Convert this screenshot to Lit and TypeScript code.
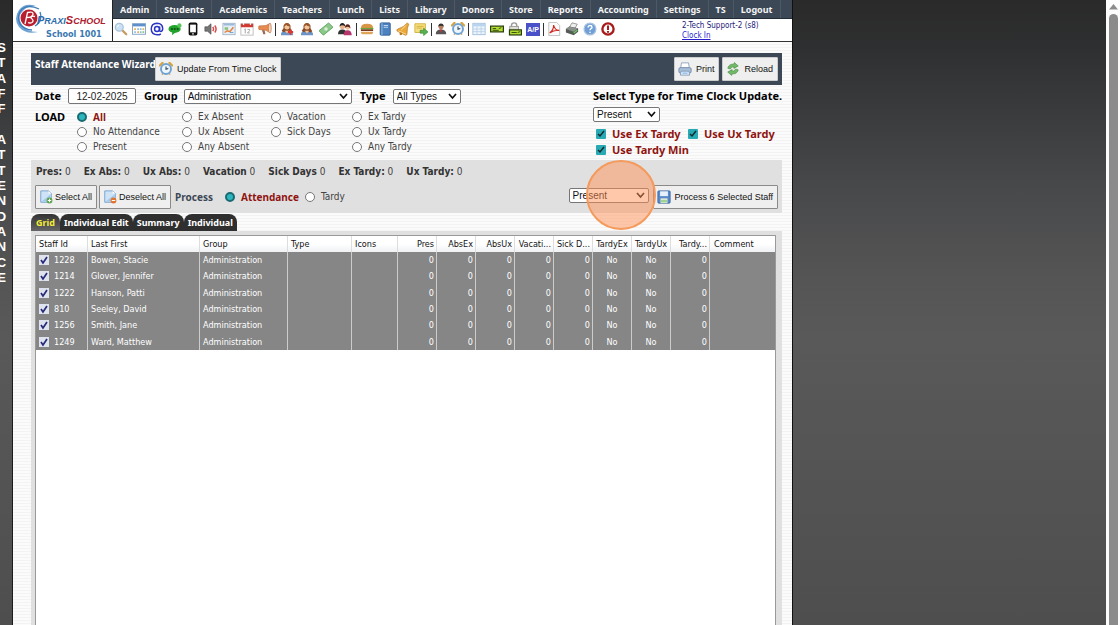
import { LitElement, html, css, svg, TemplateResult } from "lit";
import { customElement, property } from "lit/decorators.js";

const MENU = ["Admin", "Students", "Academics", "Teachers", "Lunch", "Lists", "Library", "Donors", "Store", "Reports", "Accounting", "Settings", "TS", "Logout"];

const person = svg`<path d="M1 15q0-6 7-6t7 6z" fill="#6d93c4"/><path d="M4 7L2 10l2 1.500 4-1 4 1.500 2-1.500L12 7V4q-4-6-8 0z" fill="#8a4a26"/><circle cx="8" cy="5.500" r="3" fill="#f3c69b"/><path d="M4.500 5q0-4 3.500-4t3.500 4q-3.500 0-4.500-1.500Q6 5 4.500 5z" fill="#9c552b"/><path d="M5.500 10L8 13l2.500-3z" fill="#f3c69b"/>`;
const clock = svg`<path d="M1 4l3-3M15 4l-3-3" stroke="#d9a33c" stroke-width="2.500" stroke-linecap="round"/><path d="M3.500 14.500l1-2M12.500 14.500l-1-2" stroke="#d9a33c" stroke-width="1.500"/><circle cx="8" cy="8" r="5.700" fill="#eef6fc" stroke="#6ea3d6" stroke-width="2.200"/><path d="M8 5v3.400l2.600-1" stroke="#345" fill="none" stroke-width="1.200"/>`;
const ticket = svg`<rect x=".7" y="4.700" width="14.600" height="6.600" fill="#b5dc35" stroke="#27400a" stroke-width="1.400"/><path d="M3 7.500h4M3 9.500h7M10 7.500l3-1" stroke="#27400a"/>`;
const sheet = svg`<path d="M2 1h9l3 3v10H2z" fill="#cfe3f7" stroke="#6d9dcb"/><path d="M3 13L13 5v8z" fill="#a5c8ea"/><path d="M11 1v3h3z" fill="#fff"/>`;

const ICONS: Record<string, TemplateResult> = {
  search: svg`<path d="M9 9l5 5" stroke="#c79a63" stroke-width="2.600" stroke-linecap="round"/><circle cx="6" cy="6" r="4.500" fill="#cbe2f5" stroke="#a9c3da" stroke-width="1.500"/><path d="M3.800 6q.2-2 2-2.400" stroke="#fff" fill="none"/>`,
  grid: svg`<rect x=".5" y="2" width="15" height="12" fill="#fff" stroke="#7a9cc0"/><path d="M1 2h14v3H1z" fill="#5f90cb"/><path d="M2.500 7h2v2h-2zM6 10.500h2v2H6zM12 7h2v2h-2z" fill="#e4b04f"/><path d="M6 7h2v2H6zM9 7h2v2H9zM2.500 10.500h2v2h-2zM9 10.500h2v2H9z" fill="#8fbce0"/><path d="M12 10.500h2v2h-2z" fill="#8cc476"/>`,
  at: svg`<circle cx="8" cy="8" r="2.800" fill="none" stroke="#2b35c4" stroke-width="1.700"/><path d="M11 5v4.500q0 1.500 1.500 1.500 2-.5 2-3.500 0-6-6.500-6.200Q1.500 1.500 1.400 8q.3 6.500 7 6.700 2.500 0 4-1.200" fill="none" stroke="#2b35c4" stroke-width="1.700"/>`,
  chat: svg`<ellipse cx="7.500" cy="8" rx="7" ry="4.500" fill="#22a32a"/><path d="M5 11l-.5 4 4-3z" fill="#22a32a"/><circle cx="13" cy="4" r="2.500" fill="#56c65a"/><path d="M3.500 8h2M6.700 8h2M10 8h2" stroke="#0b4510" stroke-width="1.500"/>`,
  phone: svg`<rect x="3" y=".5" width="10" height="15" rx="2" fill="#111"/><path d="M4.700 3h6.600v8.800H4.700z" fill="#fff"/><circle cx="8" cy="13.600" r=".9" fill="#fff"/>`,
  speaker: svg`<path d="M1 5.500h3L8 2v12l-4-3.500H1z" fill="#777" stroke="#444" stroke-width=".7"/><path d="M10 5.500q1.800 2.500 0 5M12.300 4q3 4 0 8" stroke="#d94a4a" fill="none" stroke-width="1.700"/>`,
  chart: svg`<rect x="1" y="1.500" width="14" height="13" fill="#e6eef5" stroke="#9fb3c6"/><path d="M2 2h12v2H2z" fill="#9bbbd9"/><path d="M3 6h4v3H3z" fill="#8bc07c"/><path d="M3 12l3-2 3 1 4-5" stroke="#e37f3c" stroke-width="1.700" fill="none"/><path d="M9 12h4" stroke="#6c9cd2"/>`,
  calendar: svg`<rect x="1" y="2" width="14" height="13" fill="#fff" stroke="#b9b9b9"/><path d="M1 2h14v4H1z" fill="#cf3a33"/><path d="M4 1v2.500M12 1v2.500" stroke="#eee" stroke-width="1.500"/><path d="M5 8.500l1-.7V13M8.500 8.500h2.500V10l-2.500 2.500H11" stroke="#999" fill="none"/>`,
  megaphone: svg`<path d="M1 4.500q-.5 2 0 4l8 1 5 3V1.500L9 4z" fill="#e98b4f" stroke="#b5683c" stroke-width=".7"/><path d="M4.500 9l1.500 5h2.500L7.500 9.500z" fill="#9a6a52"/><ellipse cx="13.500" cy="7" rx="1.700" ry="5.300" fill="#f6d5b9" stroke="#b5683c" stroke-width=".7"/>`,
  personAdd: svg`${person}<path d="M12 8.500v6M9 11.500h6" stroke="#dc3a30" stroke-width="2.200"/>`,
  person,
  money: svg`<path d="M0 10L11 1l5 5L5 15z" fill="#8cc88a" stroke="#4d9950" stroke-width=".9"/><circle cx="8" cy="8" r="2" fill="#d8efd4"/>`,
  people: svg`<circle cx="5" cy="5" r="3" fill="#e9b78d"/><path d="M1.800 5Q2 1 5 1t3.300 4Q5 2.500 1.800 5z" fill="#222"/><path d="M0 14q0-5.500 5-5.500T10 14z" fill="#333"/><circle cx="11" cy="6" r="2.800" fill="#f1c39d"/><path d="M8 6.500q0-4 3-4t3.300 5Q12 4 8 6.500z" fill="#5d2520"/><path d="M6.500 15q0-5.500 4.500-5.500t4.700 5.500z" fill="#b5366d"/>`,
  burger: svg`<path d="M1 7q0-5 7-5t7 5z" fill="#d99545"/><path d="M.7 7.500h14.600" stroke="#68a63c" stroke-width="1.500"/><path d="M1 9.300h14" stroke="#7b3b1c" stroke-width="2"/><path d="M1 11h14q0 3-3 3H4q-3 0-3-3z" fill="#e0a458"/>`,
  book: svg`<rect x="2.500" y="1" width="11.500" height="14" rx="1" fill="#4d82c0" stroke="#2e5a91"/><path d="M4.500 1v14" stroke="#9cc1e8"/><path d="M6.500 4h5M6.500 6h5" stroke="#cfe2f5"/>`,
  bell: svg`<path d="M13 1Q9 6 2 8q-2 1-.5 2.500l9 4.500q2 .5 2-1.500 0-7 2-11z" fill="#eba83a" stroke="#b8771b" stroke-width=".8"/><path d="M2.500 10l9 4" stroke="#fbe0a0"/><path d="M11 4q-2 3-5 5" stroke="#fbe0a0" fill="none"/><circle cx="5.500" cy="13.500" r="1.500" fill="#b8771b"/>`,
  note: svg`<path d="M1 2h12v7l-3 3H1z" fill="#f6df7c" stroke="#d2ae3c"/><path d="M3 5h8M3 7h6" stroke="#cfab44"/><path d="M7 9.500h4V7l5 4.300-5 4.200v-2.700H7z" fill="#58b24e" stroke="#35832f" stroke-width=".7"/>`,
  man: svg`<path d="M1 15q0-6.500 7-6.500t7 6.500z" fill="#555"/><path d="M6.500 8.500L8 14l1.500-5.500z" fill="#c33"/><circle cx="8" cy="4.800" r="3.400" fill="#b57f5e"/><path d="M4.400 4.700Q4.600 .6 8 .6t3.600 4.100Q8 2.500 4.400 4.700z" fill="#333"/>`,
  clock,
  table: svg`<rect x="1" y="1.500" width="14" height="13" fill="#eef5fc" stroke="#9dbcda"/><path d="M1 2h14v3H1z" fill="#b9d4ee"/><path d="M5.700 5v9M10.400 5v9M1 8h14M1 11h14" stroke="#b9d0e6"/>`,
  ticket,
  lockTicket: svg`<path d="M4 6V4q0-3 3-3t3 3v2" fill="none" stroke="#999" stroke-width="1.600"/><rect x="2" y="5" width="10" height="7" fill="#dcdcd4" stroke="#999"/><rect x="1.700" y="9" width="13.600" height="5.800" fill="#b5dc35" stroke="#27400a" stroke-width="1.400"/><path d="M4 12h6M11 12l3-1" stroke="#27400a"/>`,
  pdf: svg`<path d="M2 .5h9l3.500 3.500v11.500H2z" fill="#fbfbfb" stroke="#bbb"/><path d="M3 12.500Q8 9 7.500 3.500q2 6.500 6.500 6-6-.5-11 3z" fill="none" stroke="#d02a22" stroke-width="1.300"/>`,
  printerDark: svg`<path d="M5 6l3-5 6 1.500L11 8z" fill="#eee" stroke="#777" stroke-width=".8"/><path d="M1 8l4-3 10 2v4l-5 4-9-3z" fill="#555b55"/><path d="M1 8l9 3 5-4-10-2z" fill="#8a918a"/><path d="M10 12.500l4-3" stroke="#6fd05a" stroke-width="1.300"/>`,
  help: svg`<circle cx="8" cy="8" r="6.800" fill="#6f9fd6" stroke="#a9c3df" stroke-width="1.400"/><path d="M5.800 6.300q.2-2.300 2.300-2.300t2.200 2q0 1-1.300 1.700Q8 8.300 8 9.500M8 11v1.500" stroke="#fff" stroke-width="1.600" fill="none"/>`,
  alert: svg`<circle cx="8" cy="8" r="6.400" fill="#fff" stroke="#a81c1c" stroke-width="2.700"/><path d="M8 4v5M8 10.300v2" stroke="#a81c1c" stroke-width="2.300"/>`,
  printer: svg`<path d="M4 1h8l1 6H3z" fill="#fff" stroke="#8ba1bb"/><rect x="1" y="6.500" width="14" height="6" rx="1.500" fill="#a9bfd8" stroke="#6f88a8"/><path d="M3.500 10.500h9l.8 4.500H2.700z" fill="#e9f1fa" stroke="#7f99b7"/><path d="M5 12.700h6" stroke="#5e9fe0"/>`,
  reload: svg`<path d="M2 7Q3.500 2 9 2.500L9.500.7 14 4.500 9 7.300V5.400Q6 5 5 8z" fill="#73b96c" stroke="#4a9045" stroke-width=".8"/><path d="M14 9Q12.500 14 7 13.500L6.500 15.300 2 11.500 7 8.700v1.900q3 .4 4-2.600z" fill="#73b96c" stroke="#4a9045" stroke-width=".8"/>`,
  sheetAdd: svg`${sheet}<circle cx="12" cy="12" r="3.300" fill="#58a648"/><path d="M12 10v4M10 12h4" stroke="#fff" stroke-width="1.200"/>`,
  sheetRemove: svg`${sheet}<circle cx="12" cy="12" r="3.300" fill="#e3762f"/><path d="M10 12h4" stroke="#fff" stroke-width="1.200"/>`,
  save: svg`<rect x="1" y="1" width="14" height="14" rx="1" fill="#5b88c9" stroke="#3d679f"/><path d="M3.500 1.500h9V7h-9z" fill="#e8f1fb"/><path d="M4 9.500h8V15H4z" fill="#d9e9d3"/><path d="M4.500 11.500h7v2.500h-7z" fill="#9fd18f"/>`,
};

const TOOLBAR = ["search", "grid", "at", "chat", "phone", "speaker", "chart", "calendar", "megaphone", "|", "personAdd", "person", "money", "people", "|", "burger", "book", "bell", "note", "|", "man", "clock", "|", "table", "ticket", "lockTicket", "ap", "|", "pdf", "printerDark", "help", "alert"];
const WIDE = ["personAdd", "person", "people"];

const STATS = ["Pres:", "Ex Abs:", "Ux Abs:", "Vacation", "Sick Days", "Ex Tardy:", "Ux Tardy:"];

const LOAD = ["All", "Ex Absent", "Vacation", "Ex Tardy", "No Attendance", "Ux Absent", "Sick Days", "Ux Tardy", "Present", "Any Absent", "", "Any Tardy"];

const COLUMNS = [
  { label: "Staff Id", width: 52, align: "left" },
  { label: "Last First", width: 112, align: "left" },
  { label: "Group", width: 88, align: "left" },
  { label: "Type", width: 64, align: "left" },
  { label: "Icons", width: 46, align: "left" },
  { label: "Pres", width: 39, align: "right" },
  { label: "AbsEx", width: 39, align: "right" },
  { label: "AbsUx", width: 39, align: "right" },
  { label: "Vacati...", width: 39, align: "right" },
  { label: "Sick D...", width: 39, align: "right" },
  { label: "TardyEx", width: 39, align: "center" },
  { label: "TardyUx", width: 39, align: "center" },
  { label: "Tardy...", width: 39, align: "right" },
  { label: "Comment", width: 0, align: "left" },
];

const STAFF = [
  ["1228", "Bowen, Stacie"],
  ["1214", "Glover, Jennifer"],
  ["1222", "Hanson, Patti"],
  ["810", "Seeley, David"],
  ["1256", "Smith, Jane"],
  ["1249", "Ward, Matthew"],
];

@customElement("ui-icon")
class UiIcon extends LitElement {
  @property() name = "";
  static styles = css`
    :host { display: block; width: 14px; height: 14px; flex: none; }
    .glyph { display: block; width: 100%; height: 100%; }
  `;
  render() {
    return html`<svg class="glyph" viewBox="0 0 16 16" fill="none" aria-hidden="true">${ICONS[this.name]}</svg>`;
  }
}

@customElement("app-root")
class AppRoot extends LitElement {
  static styles = css`
    * { box-sizing: border-box; }
    :host {
      display: flex;
      height: 100vh;
      overflow: hidden;
      font-family: "DejaVu Sans Condensed", "DejaVu Sans", sans-serif;
      font-size: 10px;
      line-height: 14px;
      color: #444;
      background: linear-gradient(#2a2a2a 0, #2e2f30 45px, #48494b 190px, #555 280px, #585958 340px, #4e4e4e 100%);
    }
    .rail { width: 13px; flex: none; border-right: 1px solid #1c1c1c; overflow: hidden; padding-top: 40px; }
    .rail-text {
      display: flex; flex-direction: column; justify-content: space-between;
      height: 245px; width: 11px; margin-left: -4px;
      font: bold 13px/16px "Liberation Sans", sans-serif; color: #fff; text-align: center;
    }
    .rail-text span { height: 15px; line-height: 15px; }
    .page {
      flex: 0 1 779px; min-width: 0; display: flex; flex-direction: column;
      background: repeating-linear-gradient(#fbfbfb 0 2px, #f3f3f3 2px 3px);
    }
    .canvas { flex: 1; border-left: 1px solid #111; }
    .scroll { width: 14px; flex: none; background: #fcfcfc; display: flex; flex-direction: column; align-items: center; padding-top: 4px; gap: 4px; }
    .thumb { width: 9px; flex: 1; background: #8b8b8b; border-radius: 5px 5px 0 0; }

    .top { display: flex; height: 42px; background: #fff; border-bottom: 1px solid #333; }
    .brand { width: 100px; flex: none; display: flex; padding-left: 2px; border-right: 1px solid #222; }
    .mark { width: 28px; height: 32px; margin-top: 3px; flex: none; }
    .brand-text { display: flex; flex-direction: column; align-items: flex-end; padding-top: 14px; margin-left: -6px; }
    .wordmark { font: italic bold 9px/13px "Liberation Sans", sans-serif; color: #2b6cad; white-space: nowrap; }
    .wordmark b { color: #ae2030; }
    .cap { font-size: 11px; }
    .school { font: bold 9px/12px "DejaVu Sans Condensed", sans-serif; color: #3a78b0; white-space: nowrap; padding-right: 4px; }
    .bars { flex: 1; min-width: 0; }
    .menu { display: flex; height: 19px; background: #3c4856; border-bottom: 1px solid #222c36; }
    .menu a {
      padding: 0 7px; border-right: 1px solid #4c5967; color: #f4f4f4; text-decoration: none;
      font: bold 9px/19px "Noto Sans", sans-serif;
    }
    .tools { display: flex; align-items: center; gap: 4px; height: 22px; padding: 0 0 2px 1px; }
    .rule { width: 1px; height: 13px; background: #333; margin: 0 -1px; }
    .wide { width: 16px; }
    .slim { width: 12px; }
    .ap { width: 14px; height: 13px; background: #4a50c8; color: #fff; font: bold 7px/13px "Liberation Sans", sans-serif; text-align: center; }
    .user { margin: 0 0 -4px auto; width: 110px; font-size: 8px; line-height: 10px; color: #1d1a7a; white-space: nowrap; }
    .user a { color: #2a1fd0; display: block; }

    .body { flex: 1; display: flex; flex-direction: column; padding: 11px 10px 0 18px; min-height: 0; }
    .title { display: flex; align-items: flex-start; gap: 3px; height: 32px; padding: 4px; background: #3c4856; }
    .title h1 { margin: 0 -4px 0 0; font: bold 10px/14px "Noto Sans", sans-serif; color: #fff; white-space: nowrap; }
    .spacer { flex: 1; }
    button {
      display: flex; align-items: center; gap: 4px; height: 24px; padding: 0 4px 0 3px; white-space: nowrap;
      background: #efefef; border: 1px solid #8a8a8a; border-radius: 1px; color: #111;
      font: 9px/12px "Liberation Sans", sans-serif;
    }
    .title button { border-color: #ccc; }
    .group { display: flex; align-items: center; }

    .filters { display: flex; justify-content: space-between; padding: 3px 4px 0 4px; height: 75px; }
    .bold { font: bold 11px/16px "Noto Sans", sans-serif; color: #000; white-space: nowrap; }
    .date {
      width: 68px; height: 16px; margin: 0 8px 0 7px; padding: 0; text-align: center;
      font: 10px/14px "Liberation Sans", sans-serif; color: #222; background: #fff; border: 1px solid #767676; border-radius: 2px;
    }
    select {
      appearance: none; height: 15px; padding: 0 14px 0 3px; border: 1px solid #767676; border-radius: 2px;
      font: 10px/13px "Liberation Sans", sans-serif; color: #111;
      background: #fff url("data:image/svg+xml,%3Csvg xmlns='http://www.w3.org/2000/svg' width='9' height='7'%3E%3Cpath d='M1 1l3.500 4L8 1' fill='none' stroke='%23111' stroke-width='1.700'/%3E%3C/svg%3E") no-repeat right 3px center;
    }
    .w-group { width: 168px; margin: 0 8px 0 6px; }
    .w-type { width: 68px; margin-left: 7px; }
    .w-clock { width: 67px; margin-top: 3px; }
    .w-process { width: 80px; margin-right: 4px; }
    .load { display: flex; margin-top: 5px; }
    .load-label { width: 42px; }
    .load-grid { display: grid; grid-template-columns: 105px 89px 81px auto; grid-auto-rows: 15px; }
    .choice { display: flex; align-items: center; gap: 6px; white-space: nowrap; }
    .on { font-family: "Noto Sans", sans-serif; font-weight: bold; color: #8f1410; }
    input[type="radio"], input[type="checkbox"] { appearance: none; margin: 0; flex: none; width: 10px; height: 10px; }
    input[type="radio"] { border: 1px solid #777; border-radius: 50%; background: #fff; }
    input[type="radio"]:checked { border: 2px solid #1a6a72; background: #2cb6be; }
    .tick {
      border-radius: 1px;
      background: #27aab3 url("data:image/svg+xml,%3Csvg xmlns='http://www.w3.org/2000/svg' width='10' height='10'%3E%3Cpath d='M2 5l2 2 4-5' fill='none' stroke='%23102a30' stroke-width='1.500'/%3E%3C/svg%3E") center;
    }
    .clock-box { width: 185px; }
    .checks { display: grid; grid-template-columns: 92px auto; grid-auto-rows: 16px; padding: 4px 0 0 3px; }
    .checks .choice { gap: 6px; font-size: 11px; }

    .panel { background: #e0e0e0; height: 53px; padding: 5px 4px 0 5px; }
    .stats { display: flex; gap: 13px; }
    .stats b { color: #333; }
    .stats span { white-space: nowrap; }
    .actions { display: flex; align-items: center; margin: 6px 0 0 -1px; }
    .actions button { margin-right: 2px; gap: 2px; }
    .actions .process { margin-right: 0; gap: 4px; }
    .process-label { font: bold 10px/14px "Noto Sans", sans-serif; color: #3c4856; margin: 0 12px 0 2px; }
    .actions .choice { margin-right: 6px; }
    .target { position: relative; display: flex; margin-bottom: 4px; }
    .halo {
      position: absolute; left: 17px; top: -28px; width: 70px; height: 70px; border-radius: 50%;
      background: rgba(255, 145, 85, .5); border: 2px solid #f49a5c; pointer-events: none;
    }

    .tabs { display: flex; height: 17px; margin-top: 1px; }
    .tab {
      height: 17px; padding: 0 4px; border: 0; border-radius: 8px 8px 0 0; background: #2f2f2f; color: #fff;
      font: bold 9px/17px "Noto Sans", sans-serif;
    }
    .tab.current { padding: 0 5px; background: linear-gradient(#333, #666); color: #f4ee3a; }
    .sheet { flex: 1; min-height: 0; background: #e0e0e0; padding: 4px 6px 0 4px; display: flex; }
    .frame { flex: 1; background: #fff; border: 1px solid #999; border-bottom: 0; }
    table { width: 100%; height: 114px; border-collapse: separate; border-spacing: 0; table-layout: fixed; font-size: 9px; line-height: 12px; }
    th, td { padding: 0 3px; white-space: nowrap; overflow: hidden; }
    th { height: 16px; font-weight: normal; color: #111; background: linear-gradient(#fff, #fff 50%, #eff1f3); border-right: 1px solid #ddd; }
    td { background: #868686; color: #fff; border-right: 1px solid #ccc; }
    th:last-child, td:last-child { border-right: 0; padding-left: 4px; }
    .left { text-align: left; }
    .right { text-align: right; padding: 0 2px 0 1px; }
    .center { text-align: center; padding: 0; }
    .pick { display: flex; align-items: center; gap: 5px; }
    .pick input {
      background: #dfe3ee url("data:image/svg+xml,%3Csvg xmlns='http://www.w3.org/2000/svg' width='10' height='10'%3E%3Cpath d='M2 5l2 3 4-6' fill='none' stroke='%23262a78' stroke-width='1.700'/%3E%3C/svg%3E") center;
    }
  `;

  private choice(name: string, label: string, on: boolean) {
    return html`<label class="choice ${on ? "on" : ""}"><input type="radio" name=${name} ?checked=${on}>${label}</label>`;
  }

  private check(label: string) {
    return html`<label class="choice on"><input class="tick" type="checkbox" checked>${label}</label>`;
  }

  private tool(name: string) {
    if (name === "|") return html`<span class="rule"></span>`;
    if (name === "ap") return html`<span class="ap">A/P</span>`;
    return html`<ui-icon class=${WIDE.includes(name) ? "wide" : name === "man" ? "slim" : ""} name=${name}></ui-icon>`;
  }

  private cell(col: number, row: string[]) {
    if (col === 0) return html`<label class="pick"><input type="checkbox" checked>${row[0]}</label>`;
    if (col === 1) return row[1];
    if (col === 2) return "Administration";
    if (COLUMNS[col].align === "right") return "0";
    if (COLUMNS[col].align === "center") return "No";
    return "";
  }

  render() {
    return html`
      <aside class="rail"><div class="rail-text">${[..."STAFF ATTENDANCE"].map((c) => html`<span>${c}</span>`)}</div></aside>
      <main class="page">
        <header class="top">
          <div class="brand">
            <svg class="mark" viewBox="0 0 28 32" fill="none" aria-hidden="true">
              <path d="M21 3Q10-1 4 7-2 16 4 24q7 8 19 5-12 0-16-7-5-8 0-13Q12 2 21 3z" fill="#6fa3d3"/>
              <path d="M24 6Q14 1 7 6 1 13 5 21q5 6 12 6" stroke="#3e7cb8" stroke-width="1.300"/>
              <circle cx="14" cy="15" r="8.500" fill="#b81f2e"/>
              <path d="M10 21L12.500 9.500q6-1.500 5.500 2-1 3-6 3M20 13.500q-4-1-4 1.500 3.500 2.500 1 4.500-2 1-4 0" stroke="#fff" stroke-width="1.300"/>
              <path d="M25 9q3 9-5 14" stroke="#3e7cb8" stroke-width="1.300"/>
            </svg>
            <div class="brand-text">
              <div class="wordmark"><span class="cap">P</span>RAXI<b><span class="cap">S</span>CHOOL</b></div>
              <div class="school">School 1001</div>
            </div>
          </div>
          <div class="bars">
            <nav class="menu">${MENU.map((m) => html`<a href="#">${m}</a>`)}</nav>
            <div class="tools">
              ${TOOLBAR.map((t) => this.tool(t))}
              <div class="user">2-Tech Support-2 (s8)<a href="#">Clock In</a></div>
            </div>
          </div>
        </header>

        <div class="body">
          <div class="title">
            <h1>Staff Attendance Wizard</h1>
            <button><ui-icon name="clock"></ui-icon>Update From Time Clock</button>
            <span class="spacer"></span>
            <button><ui-icon name="printer"></ui-icon>Print</button>
            <button><ui-icon name="reload"></ui-icon>Reload</button>
          </div>

          <section class="filters">
            <div>
              <div class="group">
                <label class="bold" for="date">Date</label>
                <input class="date" id="date" type="text" value="12-02-2025">
                <label class="bold" for="group">Group</label>
                <select class="w-group" id="group"><option>Administration</option></select>
                <label class="bold" for="type">Type</label>
                <select class="w-type" id="type"><option>All Types</option></select>
              </div>
              <div class="load">
                <span class="bold load-label">LOAD</span>
                <div class="load-grid">${LOAD.map((l) => (l ? this.choice("load", l, l === "All") : html`<span></span>`))}</div>
              </div>
            </div>
            <div class="clock-box">
              <label class="bold" for="clock">Select Type for Time Clock Update.</label>
              <select class="w-clock" id="clock"><option>Present</option></select>
              <div class="checks">${this.check("Use Ex Tardy")}${this.check("Use Ux Tardy")}${this.check("Use Tardy Min")}</div>
            </div>
          </section>

          <section class="panel">
            <div class="stats">${STATS.map((s) => html`<span><b>${s}</b> 0</span>`)}</div>
            <div class="actions">
              <button><ui-icon name="sheetAdd"></ui-icon>Select All</button>
              <button><ui-icon name="sheetRemove"></ui-icon>Deselect All</button>
              <span class="process-label">Process</span>
              ${this.choice("mode", "Attendance", true)}${this.choice("mode", "Tardy", false)}
              <span class="spacer"></span>
              <div class="target">
                <select class="w-process" aria-label="Process type"><option>Present</option></select>
                <span class="halo"></span>
              </div>
              <button class="process"><ui-icon name="save"></ui-icon>Process 6 Selected Staff</button>
            </div>
          </section>

          <div class="tabs">
            <button class="tab current">Grid</button>
            <button class="tab">Individual Edit</button>
            <button class="tab">Summary</button>
            <button class="tab">Individual</button>
          </div>
          <section class="sheet">
            <div class="frame">
              <table>
                <colgroup>${COLUMNS.map((c) => html`<col style=${c.width ? `width:${c.width}px` : ""}>`)}</colgroup>
                <thead><tr>${COLUMNS.map((c) => html`<th class=${c.align}>${c.label}</th>`)}</tr></thead>
                <tbody>${STAFF.map((r) => html`<tr>${COLUMNS.map((c, i) => html`<td class=${c.align}>${this.cell(i, r)}</td>`)}</tr>`)}</tbody>
              </table>
            </div>
          </section>
        </div>
      </main>
      <div class="canvas"></div>
      <div class="scroll" aria-hidden="true">
        <svg width="9" height="6" viewBox="0 0 9 6"><path d="M4.500 0L9 5.500H0z" fill="#8b8b8b"/></svg>
        <div class="thumb"></div>
      </div>
    `;
  }
}
